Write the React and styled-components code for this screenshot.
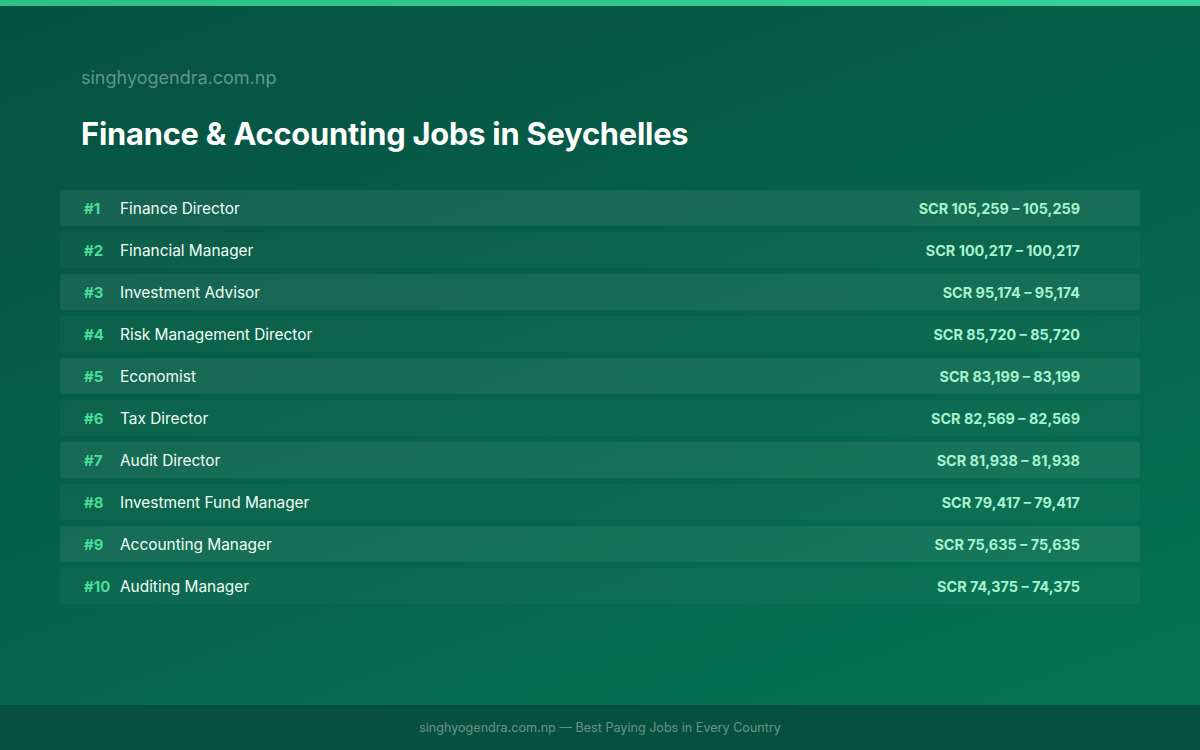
import styled, { createGlobalStyle } from "styled-components";

const GlobalStyle = createGlobalStyle`
  html, body { margin: 0; padding: 0; }
  body { font-family: Inter, "Noto Sans", sans-serif; }
`;

const jobs = [
  ["Finance Director", "SCR 105,259 – 105,259"],
  ["Financial Manager", "SCR 100,217 – 100,217"],
  ["Investment Advisor", "SCR 95,174 – 95,174"],
  ["Risk Management Director", "SCR 85,720 – 85,720"],
  ["Economist", "SCR 83,199 – 83,199"],
  ["Tax Director", "SCR 82,569 – 82,569"],
  ["Audit Director", "SCR 81,938 – 81,938"],
  ["Investment Fund Manager", "SCR 79,417 – 79,417"],
  ["Accounting Manager", "SCR 75,635 – 75,635"],
  ["Auditing Manager", "SCR 74,375 – 74,375"],
];

const Page = styled.div`
  width: 1200px;
  height: 750px;
  display: flex;
  flex-direction: column;
  background: linear-gradient(160deg, #065141 0%, #066249 50%, #047553 100%);
  overflow: hidden;
`;

const TopBar = styled.div`
  height: 6px;
  background: linear-gradient(90deg, #2bbf86, #34d399);
`;

const Main = styled.div`
  flex: 1;
  padding: 60px 60px 0;
`;

const Domain = styled.div`
  padding-left: 21px;
  font-size: 18px;
  color: rgba(255, 255, 255, 0.38);
  line-height: 24px;
`;

const Title = styled.h1`
  margin: 24px 0 36px;
  padding-left: 21px;
  font-size: 30.8px;
  font-weight: 700;
  color: #fff;
  line-height: 40px;
  letter-spacing: -0.2px;
`;

const List = styled.div`
  display: flex;
  flex-direction: column;
  gap: 6px;
`;

const Row = styled.div`
  height: 36px;
  display: flex;
  align-items: center;
  padding: 0 60px 0 24px;
  border-radius: 4px;
  background: ${(p) => (p.$odd ? "rgba(255,255,255,0.07)" : "rgba(255,255,255,0.03)")};
`;

const Rank = styled.span`
  width: 36px;
  font-size: 15px;
  font-weight: 700;
  color: #4ade9a;
`;

const Name = styled.span`
  flex: 1;
  font-size: 15.4px;
  color: #f0fdf4;
`;

const Salary = styled.span`
  font-size: 14.4px;
  font-weight: 700;
  color: #a7f3d0;
`;

const Footer = styled.div`
  height: 45px;
  display: flex;
  align-items: center;
  justify-content: center;
  background: #06503d;
  font-size: 12.6px;
  color: rgba(255, 255, 255, 0.4);
`;

export default function App() {
  return (
    <Page>
      <GlobalStyle />
      <TopBar />
      <Main>
        <Domain>singhyogendra.com.np</Domain>
        <Title>Finance &amp; Accounting Jobs in Seychelles</Title>
        <List>
          {jobs.map(([name, salary], i) => (
            <Row key={name} $odd={i % 2 === 0}>
              <Rank>#{i + 1}</Rank>
              <Name>{name}</Name>
              <Salary>{salary}</Salary>
            </Row>
          ))}
        </List>
      </Main>
      <Footer>singhyogendra.com.np — Best Paying Jobs in Every Country</Footer>
    </Page>
  );
}
